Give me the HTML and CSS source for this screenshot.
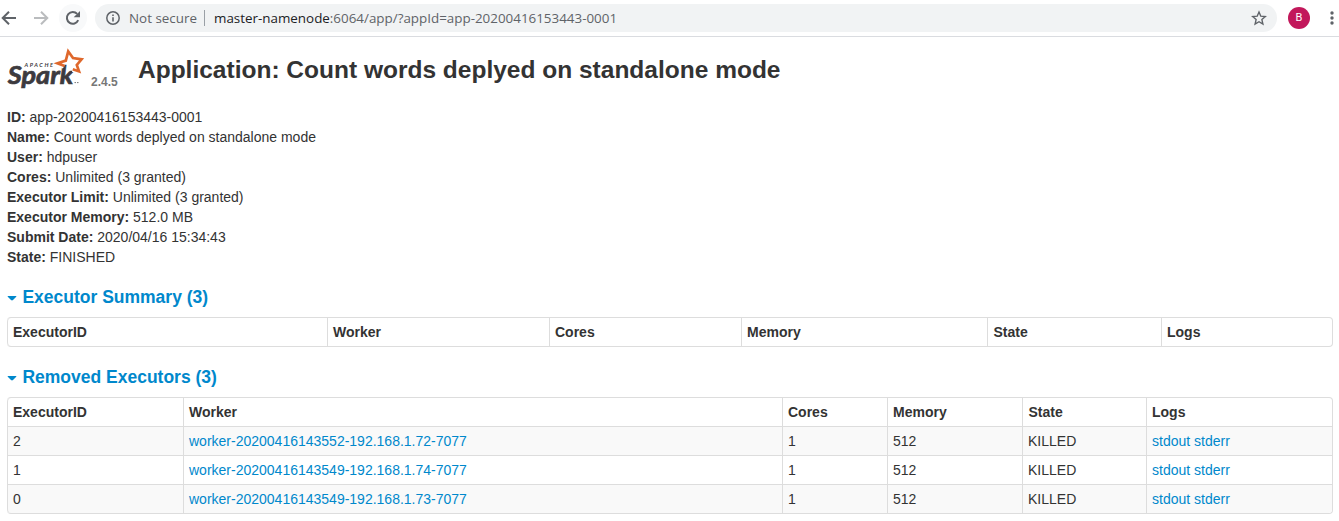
FILE: index.html
```html
<!DOCTYPE html>
<html lang="en">
<head>
<meta charset="utf-8">
<title>Application: Count words deplyed on standalone mode</title>
<link rel="stylesheet" href="styles.css">
</head>
<body>
<div class="toolbar">
  <svg class="nav" width="94" height="36" viewBox="0 0 94 36" fill="none">
    <circle cx="73" cy="18" r="14" fill="#f8f9fa"/>
    <path d="M16 18H3M9 11.7L2.7 18L9 24.3" stroke="#5f6368" stroke-width="2"/>
    <path d="M34 18H47M41 11.7L47.3 18L41 24.3" stroke="#babcbe" stroke-width="2"/>
    <path d="M78.2 20.2A5.9 5.9 0 1 1 77.2 13.9" stroke="#5f6368" stroke-width="2"/>
    <path d="M80 11V17.3H73.7Z" fill="#5f6368"/>
  </svg>
  <div class="address">
    <svg class="info" width="16" height="16" viewBox="0 0 16 16"><circle cx="8" cy="8" r="6.2" fill="none" stroke="#5f6368" stroke-width="1.5"/><path d="M7.2 7.2H8.8V11.5H7.2ZM7.2 4.4H8.8V6H7.2Z" fill="#5f6368"/></svg>
    <span class="insecure">Not secure</span>
    <span class="url"><span class="host">master-namenode</span><span class="path">:6064/app/?appId=app-20200416153443-0001</span></span>
    <svg class="bookmark" width="16" height="16" viewBox="0 0 16 16"><path d="M8 2L9.8 6.2L14.3 6.6L10.9 9.6L11.9 14L8 11.7L4.1 14L5.1 9.6L1.7 6.6L6.2 6.2Z" fill="none" stroke="#5f6368" stroke-width="1.4"/></svg>
  </div>
  <span class="avatar">B</span>
  <svg class="more" width="8" height="16" viewBox="0 0 8 16" fill="#5f6368"><circle cx="4" cy="3" r="1.7"/><circle cx="4" cy="8" r="1.7"/><circle cx="4" cy="13" r="1.7"/></svg>
</div>
<main class="page">
  <header class="title">
    <svg class="logo" width="80" height="44" viewBox="6 47 80 44">
      <text class="apache" x="24.5" y="66.8" textLength="28.5">APACHE</text>
      <text class="spark" x="7.8" y="83.6" textLength="65.5" lengthAdjust="spacingAndGlyphs">Spark</text>
      <path d="M64 66.5L57.5 63L65.8 60.6L68.2 51.3L73 58L81.6 59.3L76.8 65L79 71.4L72.5 69.6" fill="none" stroke="#fff" stroke-width="4.6"/>
      <path d="M64.6 66L57.5 63.3L65.8 60.6L68.2 51.3L73 58L81.6 59.3L76.8 65L79 71.4L72.8 69.2" fill="none" stroke="#df682c" stroke-width="2.7"/>
      <path d="M74.5 82.6H76M77 82.6H78.5" stroke="#777" stroke-width="1"/>
    </svg>
    <span class="version">2.4.5</span>
    <h1>Application: Count words deplyed on standalone mode</h1>
  </header>
  <ul class="facts">
    <li><b>ID:</b> app-20200416153443-0001</li>
    <li><b>Name:</b> Count words deplyed on standalone mode</li>
    <li><b>User:</b> hdpuser</li>
    <li><b>Cores:</b> Unlimited (3 granted)</li>
    <li><b>Executor Limit:</b> Unlimited (3 granted)</li>
    <li><b>Executor Memory:</b> 512.0 MB</li>
    <li><b>Submit Date:</b> 2020/04/16 15:34:43</li>
    <li><b>State:</b> FINISHED</li>
  </ul>
  <h2><i class="caret"></i>Executor Summary (3)</h2>
  <table>
    <colgroup><col class="a1"><col class="a2"><col class="a3"><col class="a4"><col class="a5"><col></colgroup>
    <tr><th>ExecutorID</th><th>Worker</th><th>Cores</th><th>Memory</th><th class="state">State</th><th>Logs</th></tr>
  </table>
  <h2><i class="caret"></i>Removed Executors (3)</h2>
  <table>
    <colgroup><col class="b1"><col class="b2"><col class="b3"><col class="b4"><col class="b5"><col></colgroup>
    <tr><th>ExecutorID</th><th>Worker</th><th>Cores</th><th>Memory</th><th class="state">State</th><th>Logs</th></tr>
    <tr><td>2</td><td><a>worker-20200416143552-192.168.1.72-7077</a></td><td>1</td><td>512</td><td>KILLED</td><td><a>stdout</a> <a>stderr</a></td></tr>
    <tr><td>1</td><td><a>worker-20200416143549-192.168.1.74-7077</a></td><td>1</td><td>512</td><td>KILLED</td><td><a>stdout</a> <a>stderr</a></td></tr>
    <tr><td>0</td><td><a>worker-20200416143549-192.168.1.73-7077</a></td><td>1</td><td>512</td><td>KILLED</td><td><a>stdout</a> <a>stderr</a></td></tr>
  </table>
</main>
</body>
</html>
```
FILE: styles.css
```css
* { box-sizing: border-box; }
body { margin: 0; background: #fff; color: #333; font: 14px/20px "Liberation Sans", Arial, sans-serif; overflow: hidden; }
.toolbar { display: flex; align-items: center; height: 37px; padding-right: 3px; border-bottom: 1px solid #dadce0; }
.nav { flex: none; margin-right: 1px; }
.address { display: flex; align-items: center; width: 1182px; height: 28px; padding: 0 10px; border-radius: 14px; background: #f1f3f4; font: 13.4px/20px "Open Sans", sans-serif; white-space: nowrap; }
.info { margin-right: 8px; }
.insecure { width: 76px; padding-right: 8px; color: #5f6368; border-right: 1px solid #9aa0a6; line-height: 16px; }
.url { margin-left: 9px; flex: 1; color: #5f6368; }
.host { color: #202124; }
.avatar { margin-left: 11px; width: 22px; height: 22px; border-radius: 50%; background: #c2185b; color: #fff; font: 11px/22px Roboto, sans-serif; text-align: center; }
.more { margin-left: 18px; flex: none; }
.page { padding: 10px 6px 0 7px; }
.title { display: flex; height: 60px; }
.logo { flex: none; margin-left: -1px; }
.apache { font: italic bold 5.6px Lato, sans-serif; fill: #3c3a3e; }
.spark { font: italic bold 25.5px Lato, sans-serif; fill: #3c3a3e; stroke: #3c3a3e; stroke-width: .7px; }
.version { width: 52px; padding: 25px 0 0 5px; color: #777; font-weight: bold; font-size: 12px; }
h1 { margin: 3px 0 0; font-size: 24.5px; line-height: 40px; white-space: nowrap; }
.facts { list-style: none; margin: 0; padding: 0; height: 160px; }
h2 { display: flex; align-items: center; margin: 20px 0 10px; height: 20px; font-size: 17.5px; line-height: 20px; color: #08c; }
.caret { width: 10px; margin: 2px 5.4px 0 0; border: solid transparent; border-width: 5px 5px 0; border-top-color: #08c; clip-path: inset(0 .5px); }
table { width: 1326px; table-layout: fixed; border: 1px solid #ddd; border-left: 0; border-radius: 4px; border-collapse: separate; border-spacing: 0; }
th, td { height: 28px; padding: 4px 5px; line-height: 20px; text-align: left; border-left: 1px solid #ddd; }
.state { padding-left: 5.5px; }
td { height: 29px; border-top: 1px solid #ddd; }
tr:nth-child(even) td { background: #f9f9f9; }
tr:first-child th:first-child { border-top-left-radius: 4px; }
tr:last-child > :first-child { border-bottom-left-radius: 4px; }
tr:last-child > :last-child { border-bottom-right-radius: 4px; }
a { color: #08c; }
.a1 { width: 320px; } .a2 { width: 222px; } .a3 { width: 192px; } .a4 { width: 246px; } .a5 { width: 174px; }
.b1 { width: 176px; } .b2 { width: 599px; } .b3 { width: 105px; } .b4 { width: 135px; } .b5 { width: 124px; }
```
